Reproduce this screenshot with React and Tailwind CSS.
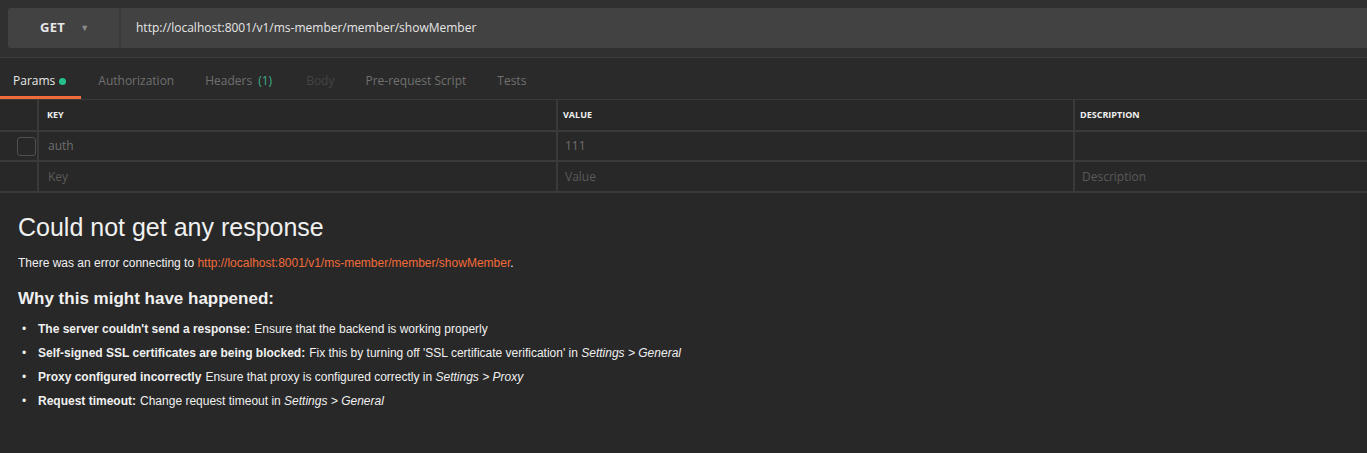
import React from "react";

const tabs = [
  { name: "Params", active: true, dot: true },
  { name: "Authorization" },
  { name: "Headers", count: "(1)" },
  { name: "Body", disabled: true },
  { name: "Pre-request Script" },
  { name: "Tests" },
];

export default function App() {
  return (
    <div
      className="w-[1367px] h-[453px] bg-[#282828] overflow-hidden"
      style={{ fontFamily: '"Open Sans", "Liberation Sans", sans-serif' }}
    >
      {/* URL BAR */}
      <div className="h-[58px] bg-[#303030] pt-[8px] pl-[8px] border-b border-[#3d3d3d]">
        <div className="h-[40px] flex bg-[#424242] rounded-l-[3px]">
          <div className="w-[113px] flex items-center pl-[32px] border-r-2 border-[#3a3a3a]">
            <span className="text-[13px] font-bold text-[#e8e8e8] tracking-[0.3px]">GET</span>
            <span className="ml-[15px] text-[9px] text-[#8a8a8a]">▼</span>
          </div>
          <div className="flex items-center pl-[15px] text-[12px] text-[#e6e6e6]">
            http://localhost:8001/v1/ms-member/member/showMember
          </div>
        </div>
      </div>

      {/* TABS */}
      <div className="h-[42px] flex border-b border-[#3a3a3a] bg-[#2a2a2a]">
        {tabs.map((t) => (
          <div
            key={t.name}
            className={
              "relative flex items-center pt-[5px] px-[14px] mr-[3px] text-[12px] " +
              (t.active
                ? "text-[#e8e8e8] pl-[13px] pr-[15px]"
                : t.disabled
                ? "text-[#444444]"
                : "text-[#707070]")
            }
          >
            {t.name}
            {t.count && <span className="ml-[6px] mr-[3px] text-[#3fae86]">{t.count}</span>}
            {t.dot && (
              <span className="ml-[4px] w-[7px] h-[7px] rounded-full bg-[#27c08a]" />
            )}
            {t.active && (
              <span className="absolute left-0 right-0 bottom-0 h-[3px] bg-[#f26b3a]" />
            )}
          </div>
        ))}
      </div>

      {/* TABLE */}
      <div className="border-b-2 border-[#3a3a3a]">
        <div className="h-[32px] flex border-b-2 border-[#3a3a3a] text-[9px] font-bold text-[#f0f0f0]">
          <div className="w-[39px] border-r-2 border-[#3a3a3a]" />
          <div className="w-[519px] border-r-2 border-[#3a3a3a] flex items-center pl-[8px]">KEY</div>
          <div className="w-[517px] border-r-2 border-[#3a3a3a] flex items-center pl-[5px]">VALUE</div>
          <div className="flex-1 flex items-center pl-[5px]">DESCRIPTION</div>
        </div>
        <div className="h-[30px] flex border-b-2 border-[#3a3a3a] text-[12px] text-[#6e6e6e]">
          <div className="w-[39px] border-r-2 border-[#3a3a3a] flex items-center justify-end pr-[1px]">
            <span className="w-[19px] h-[19px] rounded-[3px] border border-[#505050]" />
          </div>
          <div className="w-[519px] border-r-2 border-[#3a3a3a] flex items-center pl-[9px]">auth</div>
          <div className="w-[517px] border-r-2 border-[#3a3a3a] flex items-center pl-[7px]">111</div>
          <div className="flex-1" />
        </div>
        <div className="h-[29px] flex text-[12px] text-[#5a5a5a]">
          <div className="w-[39px] border-r-2 border-[#3a3a3a]" />
          <div className="w-[519px] border-r-2 border-[#3a3a3a] flex items-center pl-[9px]">Key</div>
          <div className="w-[517px] border-r-2 border-[#3a3a3a] flex items-center pl-[7px]">Value</div>
          <div className="flex-1 flex items-center pl-[7px]">Description</div>
        </div>
      </div>

      {/* RESPONSE ERROR */}
      <div
        className="pl-[18px] pt-[19px] text-[#f0f0f0]"
        style={{ fontFamily: '"Liberation Sans", Arial, sans-serif' }}
      >
        <h1 className="text-[25px] leading-[30px]">Could not get any response</h1>
        <p className="mt-[14px] text-[12px] leading-[14px]">
          There was an error connecting to{" "}
          <span className="text-[#f26b3a]">http://localhost:8001/v1/ms-member/member/showMember</span>.
        </p>
        <h2 className="mt-[19px] text-[17px] font-bold leading-[20px]">Why this might have happened:</h2>
        <ul className="mt-[8px] text-[12px]">
          <li className="h-[24px] flex items-center">
            <span className="w-[20px] pl-[4px]">•</span>
            <b className="mr-[4px]">The server couldn't send a response:</b>Ensure that the backend is working properly
          </li>
          <li className="h-[24px] flex items-center">
            <span className="w-[20px] pl-[4px]">•</span>
            <b className="mr-[4px]">Self-signed SSL certificates are being blocked:</b>Fix this by turning off 'SSL certificate verification' in&nbsp;<i>Settings &gt; General</i>
          </li>
          <li className="h-[24px] flex items-center">
            <span className="w-[20px] pl-[4px]">•</span>
            <b className="mr-[4px]">Proxy configured incorrectly</b>Ensure that proxy is configured correctly in&nbsp;<i>Settings &gt; Proxy</i>
          </li>
          <li className="h-[24px] flex items-center">
            <span className="w-[20px] pl-[4px]">•</span>
            <b className="mr-[4px]">Request timeout:</b>Change request timeout in&nbsp;<i>Settings &gt; General</i>
          </li>
        </ul>
      </div>
    </div>
  );
}
